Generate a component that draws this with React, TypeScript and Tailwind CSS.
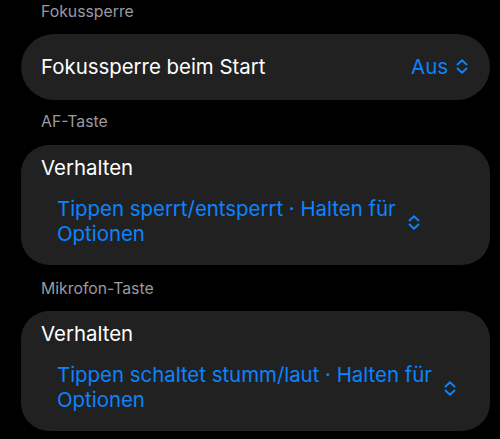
import React from 'react';

const font = { fontFamily: 'Inter, "Noto Sans", sans-serif' };

function Chevrons({ className = '' }: { className?: string }) {
  return (
    <svg
      viewBox="0 0 12 16"
      className={className}
      fill="none"
      stroke="#0a84ff"
      strokeWidth={1.9}
      strokeLinecap="round"
      strokeLinejoin="round"
    >
      <path d="M1.5 6 L6 1.8 L10.5 6" />
      <path d="M1.5 10 L6 14.2 L10.5 10" />
    </svg>
  );
}

function SectionHeader({ children }: { children: React.ReactNode }) {
  return (
    <div className="pl-[41px] text-[15.8px] leading-[20px] text-[#9a9aa0]">
      {children}
    </div>
  );
}

function BehaviourCard({ lines }: { lines: [string, string] }) {
  return (
    <div className="ml-[21px] mr-[10px] h-[120px] rounded-[28px] bg-[#212121] pl-[20px] pt-[10px]">
      <div className="text-[20.4px] leading-[26px] text-white">Verhalten</div>
      <div className="mt-[15px] flex items-center pl-[16px]">
        <div className="text-[20.4px] leading-[25px] text-[#0a84ff]">
          {lines[0]}
          <br />
          {lines[1]}
        </div>
        <Chevrons className="ml-[12px] mt-[2px] h-[17px] w-[12px]" />
      </div>
    </div>
  );
}

export default function App() {
  return (
    <div className="h-[439px] w-[500px] overflow-hidden bg-black font-normal" style={font}>
      <div className="pt-[2px]">
        <SectionHeader>Fokussperre</SectionHeader>
      </div>

      {/* Fokussperre beim Start */}
      <div className="ml-[21px] mr-[10px] mt-[12px] flex h-[66px] items-center justify-between rounded-full bg-[#212121] pl-[20px] pr-[22px]">
        <span className="text-[20.4px] text-white">Fokussperre beim Start</span>
        <span className="flex items-center gap-[8px] text-[20.4px] text-[#0a84ff]">
          Aus
          <Chevrons className="h-[17px] w-[12px]" />
        </span>
      </div>

      <div className="mt-[12px]">
        <SectionHeader>AF-Taste</SectionHeader>
      </div>
      <div className="mt-[13px]">
        <BehaviourCard lines={['Tippen sperrt/entsperrt · Halten für', 'Optionen']} />
      </div>

      <div className="mt-[14px]">
        <SectionHeader>Mikrofon-Taste</SectionHeader>
      </div>
      <div className="mt-[12px]">
        <BehaviourCard lines={['Tippen schaltet stumm/laut · Halten für', 'Optionen']} />
      </div>
    </div>
  );
}
